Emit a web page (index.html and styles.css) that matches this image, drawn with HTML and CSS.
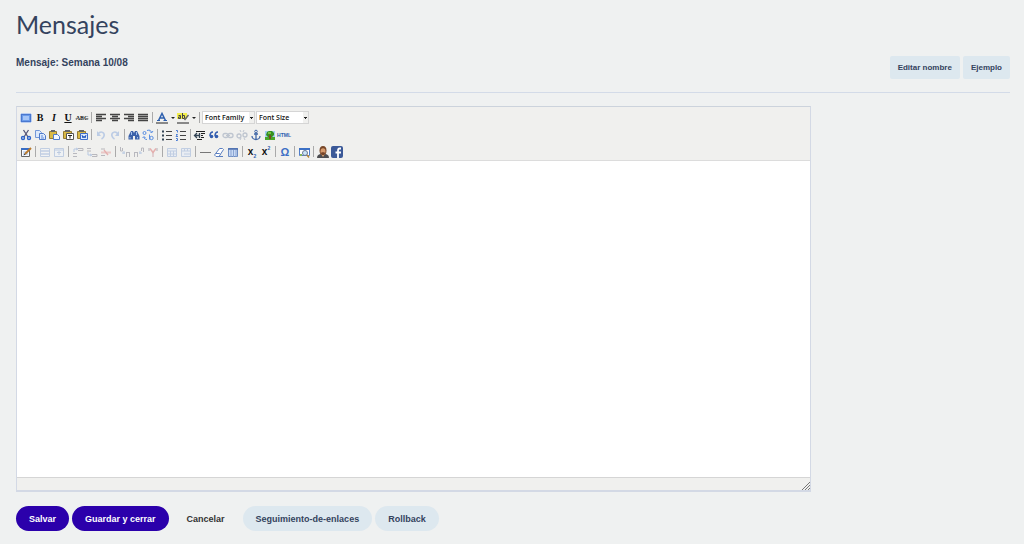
FILE: index.html
```html
<!DOCTYPE html>
<html lang="es">
<head>
    <meta charset="UTF-8">
    <meta name="viewport" content="width=device-width, initial-scale=1.0">
    <title>Mensajes</title>
    <link rel="stylesheet" href="styles.css">
</head>
<body>
    <h1>Mensajes</h1>

    <div class="header">
        <h2>Mensaje: Semana 10/08</h2>
        <div class="header-actions">
            <button type="button" class="btn-small">Editar nombre</button>
            <button type="button" class="btn-small">Ejemplo</button>
        </div>
    </div>

    <form>
        <div class="editor">
            <div class="toolbar">
                <!-- Formato de texto -->
                <div class="toolbar-row">
                    <button type="button" class="tool" aria-label="Pantalla completa"><svg viewBox="0 0 14 14"><rect x="2.5" y="3.5" width="9" height="7" fill="#6a9bea" stroke="#4a78cf"/><rect x="4" y="5" width="6" height="4" fill="#a5c5f7"/><path d="M2 2.500h10M2 11.500h10M1.500 3v8M12.500 3v8" stroke="#b9cdf0"/></svg></button>
                    <button type="button" class="tool bold" aria-label="Negrita">B</button>
                    <button type="button" class="tool italic" aria-label="Cursiva">I</button>
                    <button type="button" class="tool underline" aria-label="Subrayado">U</button>
                    <button type="button" class="tool strike" aria-label="Tachado">ABC</button>
                    <span class="separator"></span>
                    <button type="button" class="tool" aria-label="Izquierda"><svg viewBox="0 0 14 14"><path d="M2 3.500h10M2 5.500h6M2 7.500h10M2 9.500h6" stroke="#444" stroke-width="1.400"/></svg></button>
                    <button type="button" class="tool" aria-label="Centrar"><svg viewBox="0 0 14 14"><path d="M2 3.500h10M4 5.500h6M2 7.500h10M4 9.500h6" stroke="#444" stroke-width="1.400"/></svg></button>
                    <button type="button" class="tool" aria-label="Derecha"><svg viewBox="0 0 14 14"><path d="M2 3.500h10M6 5.500h6M2 7.500h10M6 9.500h6" stroke="#444" stroke-width="1.400"/></svg></button>
                    <button type="button" class="tool" aria-label="Justificar"><svg viewBox="0 0 14 14"><path d="M2 3.500h10M2 5.500h10M2 7.500h10M2 9.500h10" stroke="#444" stroke-width="1.400"/></svg></button>
                    <span class="separator"></span>
                    <button type="button" class="tool" aria-label="Color del texto"><svg viewBox="0 0 14 14"><path d="M3.500 9.500L7 2.500l3.500 7M5 7h4" fill="none" stroke="#2d5fae" stroke-width="1.500"/><path d="M2 9.500h3M8.500 9.500h3.500" stroke="#2d5fae"/><path d="M1 12h12" stroke="#888" stroke-width="2"/></svg></button>
                    <button type="button" class="arrow" aria-label="Elegir color"></button>
                    <button type="button" class="tool" aria-label="Color de fondo"><svg viewBox="0 0 14 14"><path d="M1 2h10v6H1z" fill="#f3ef4b"/><path d="M2.500 4.500h2v3h-2v-1.500h2M6.500 2v5.500h2v-3h-2" fill="none" stroke="#444"/><path d="M8.500 9l4-5" stroke="#666" stroke-width="1.500"/><path d="M1 12h12" stroke="#888" stroke-width="2"/></svg></button>
                    <button type="button" class="arrow" aria-label="Elegir color de fondo"></button>
                    <span class="separator"></span>
                    <select class="list" aria-label="Font Family"><option>Font Family</option></select>
                    <select class="list" aria-label="Font Size"><option>Font Size</option></select>
                </div>

                <!-- Portapapeles, listas y enlaces -->
                <div class="toolbar-row">
                    <button type="button" class="tool" aria-label="Cortar"><svg viewBox="0 0 14 14"><path d="M4.500 2l4.500 7M9.500 2L5 9" stroke="#557" stroke-width="1.300"/><circle cx="4" cy="10" r="1.500" fill="none" stroke="#2c62c9" stroke-width="1.400"/><circle cx="10" cy="10" r="1.500" fill="none" stroke="#2c62c9" stroke-width="1.400"/></svg></button>
                    <button type="button" class="tool" aria-label="Copiar"><svg viewBox="0 0 14 14"><path d="M2.500 2.500h4l2 2v5h-6z" fill="#dce9fc" stroke="#7498d8"/><path d="M6.500 5.500h4l2 2v4h-6z" fill="#dce9fc" stroke="#4f7bcb"/><path d="M8 8h2M8 10h3" stroke="#5e8add"/></svg></button>
                    <button type="button" class="tool" aria-label="Pegar"><svg viewBox="0 0 14 14"><path d="M2.500 3.500h7v7h-7z" fill="#d9b945" stroke="#957a32"/><path d="M4 2h4v2H4z" fill="#666"/><path d="M6.500 6.500h4l2 2v3h-6z" fill="#f4f8ff" stroke="#4f7bcb"/></svg></button>
                    <button type="button" class="tool" aria-label="Pegar texto"><svg viewBox="0 0 14 14"><path d="M2.500 3.500h8v7h-8z" fill="#d9b945" stroke="#957a32"/><path d="M4 2h5v2H4z" fill="#666"/><path d="M5.500 5.500h7v6h-7z" fill="#fff" stroke="#555"/><path d="M7 7.500h4M9 7.500v3" stroke="#222"/></svg></button>
                    <button type="button" class="tool" aria-label="Pegar desde Word"><svg viewBox="0 0 14 14"><path d="M2.500 3.500h8v7h-8z" fill="#d9b945" stroke="#957a32"/><path d="M4 2h5v2H4z" fill="#666"/><path d="M5.500 5.500h7v6h-7z" fill="#dce9fc" stroke="#3e6ecb"/><path d="M7 7l1 3 1-2 1 2 1-3" fill="none" stroke="#2458bd"/></svg></button>
                    <span class="separator"></span>
                    <button type="button" class="tool" aria-label="Deshacer" disabled><svg viewBox="0 0 14 14"><path d="M4 6c3-4 7-1 6 2-.4 1.500-1.500 2.500-2.500 3" fill="none" stroke="#6f97d8" stroke-width="1.600"/><path d="M3 3v5h4z" fill="#6f97d8"/></svg></button>
                    <button type="button" class="tool" aria-label="Rehacer" disabled><svg viewBox="0 0 14 14"><path d="M10 6c-3-4-7-1-6 2 .4 1.500 1.500 2.500 2.500 3" fill="none" stroke="#6f97d8" stroke-width="1.600"/><path d="M11 3v5H7z" fill="#6f97d8"/></svg></button>
                    <span class="separator"></span>
                    <button type="button" class="tool" aria-label="Buscar"><svg viewBox="0 0 14 14"><path d="M4 3h2l1 2 1-2h2l2.500 5v3.500H8V8H6v3.500H1.500V8z" fill="#3c62aa"/><path d="M4.500 4v3M9.500 4v3M3 9v1.500M10.500 9v1.500" stroke="#a5c2ee"/></svg></button>
                    <button type="button" class="tool" aria-label="Reemplazar"><svg viewBox="0 0 14 14"><circle cx="3.500" cy="5" r="1.500" fill="none" stroke="#5b8fe2"/><path d="M8.500 6.500v5M6 2.500c3-1 4 0 4.500 2M9 3.500l1.500 1.500L12 3M6 11.500c-2 0-3-1-3-2.500M1.500 10L3 8.500 4.500 10" fill="none" stroke="#5b8fe2"/><circle cx="10.500" cy="10" r="1.700" fill="none" stroke="#5b8fe2"/></svg></button>
                    <span class="separator"></span>
                    <button type="button" class="tool" aria-label="Viñetas"><svg viewBox="0 0 14 14"><path d="M6 3.500h6M6 7.500h6M6 11.500h6" stroke="#444"/><path d="M2 3.500h2M2 7.500h2M2 11.500h2" stroke="#345" stroke-width="1.800"/></svg></button>
                    <button type="button" class="tool" aria-label="Numeración"><svg viewBox="0 0 14 14"><path d="M6 3.500h6M6 7.500h6M6 11.500h6" stroke="#444"/><path d="M2 2.500h1.500v2M2 6.500h1.500L2 8.500h2M2 10.500h1.500v2H2" fill="none" stroke="#4f80d5"/></svg></button>
                    <span class="separator"></span>
                    <button type="button" class="tool" aria-label="Sangría"><svg viewBox="0 0 14 14"><path d="M3 3.500h9M8 5.500h4M8 7.500h2M8 9.500h3M4 11.500h5" stroke="#222"/><path d="M1.500 7.500H7M4 5L1.500 7.500 4 10M6.500 5v5" fill="none" stroke="#345" stroke-width="1.300"/></svg></button>
                    <button type="button" class="tool" aria-label="Cita"><svg viewBox="0 0 14 14"><path d="M6 4C4 4 3 6 3 8M11 4C9 4 8 6 8 8" fill="none" stroke="#315caf" stroke-width="1.500"/><circle cx="4.500" cy="8.500" r="1.800" fill="#315caf"/><circle cx="9.500" cy="8.500" r="1.800" fill="#315caf"/></svg></button>
                    <button type="button" class="tool" aria-label="Enlace" disabled><svg viewBox="0 0 14 14"><rect x="2" y="5.500" width="5" height="4" rx="2" fill="none" stroke="#7486a3" stroke-width="1.300"/><rect x="7" y="5.500" width="5" height="4" rx="2" fill="none" stroke="#7486a3" stroke-width="1.300"/><path d="M5 7.500h4" stroke="#7486a3"/></svg></button>
                    <button type="button" class="tool" aria-label="Quitar enlace" disabled><svg viewBox="0 0 14 14"><rect x="2" y="6" width="4" height="4" rx="2" fill="none" stroke="#7486a3" stroke-width="1.300"/><rect x="8" y="5" width="4" height="4" rx="2" fill="none" stroke="#7486a3" stroke-width="1.300"/><path d="M5 2l1 2M9 2L8 4M5 12l1-2M10 12l-1-2" stroke="#7486a3"/></svg></button>
                    <button type="button" class="tool" aria-label="Ancla"><svg viewBox="0 0 14 14"><circle cx="7" cy="3.500" r="1.300" fill="none" stroke="#4268a8"/><path d="M7 5v6M5 6h4M3 8c0 2 2 3.500 4 3.500S11 10 11 8" fill="none" stroke="#4268a8" stroke-width="1.300"/></svg></button>
                    <button type="button" class="tool" aria-label="Imagen"><svg viewBox="0 0 14 14"><path d="M2 3h10v8H2z" fill="#a6cdf1"/><path d="M2 9h10v3H2z" fill="#49a528"/><path d="M4 4l2-1h3l2 2v2L9 9H5L3 7z" fill="#35901f"/><path d="M5 4h3v2H5z" fill="#76c23e"/><path d="M7 7v4" stroke="#774b23" stroke-width="2"/></svg></button>
                    <button type="button" class="tool html" aria-label="HTML">HTML</button>
                </div>

                <!-- Tablas y extras -->
                <div class="toolbar-row">
                    <button type="button" class="tool" aria-label="Tabla"><svg viewBox="0 0 14 14"><path d="M2.500 3.500h8v8h-8z" fill="#f7faff" stroke="#666"/><path d="M2 4h9" stroke="#386dc4" stroke-width="2"/><path d="M4 7h3M4 9h5" stroke="#a1bbe2"/><path d="M6 9l6-6" stroke="#b9792c" stroke-width="2"/><path d="M4.500 10.500l1-2 1 1z" fill="#333"/></svg></button>
                    <span class="separator"></span>
                    <button type="button" class="tool" aria-label="Propiedades de fila" disabled><svg viewBox="0 0 14 14"><path d="M2.500 3.500h9v8h-9z" fill="#f4f7fc" stroke="#7d9dd2"/><path d="M3 6h8M3 9h8" stroke="#7d9dd2" stroke-width="1.500"/></svg></button>
                    <button type="button" class="tool" aria-label="Propiedades de celda" disabled><svg viewBox="0 0 14 14"><path d="M2.500 3.500h9v8h-9z" fill="#edf3fd" stroke="#7d9dd2"/><path d="M2 5h10M5 7.500h4M7 6v4" stroke="#7396d0"/></svg></button>
                    <span class="separator"></span>
                    <button type="button" class="tool" aria-label="Fila antes" disabled><svg viewBox="0 0 14 14"><path d="M7 3.500h5v2H7M2 8.500h4M2 11.500h4" fill="none" stroke="#667"/><path d="M3 7V4h3M5 3l2 1-2 1" fill="none" stroke="#6890d1"/></svg></button>
                    <button type="button" class="tool" aria-label="Fila después" disabled><svg viewBox="0 0 14 14"><path d="M2 3.500h4M2 6h4M7 9.500h5v2H7" fill="none" stroke="#667"/><path d="M3 7v3h3M5 9l2 1-2 1" fill="none" stroke="#6890d1"/></svg></button>
                    <button type="button" class="tool" aria-label="Borrar fila" disabled><svg viewBox="0 0 14 14"><path d="M2 4h4M2 10.500h4" stroke="#667"/><path d="M2 6.500h10v2H2z" fill="#e38f8f"/><path d="M5 5l4 5" stroke="#d65151" stroke-width="1.300"/></svg></button>
                    <span class="separator"></span>
                    <button type="button" class="tool" aria-label="Columna antes" disabled><svg viewBox="0 0 14 14"><path d="M2.500 2v4h2V3M8.500 7v5M11.500 7v5M8 7.500h4" fill="none" stroke="#667"/><path d="M4 8h3M6 6v3" stroke="#6890d1"/></svg></button>
                    <button type="button" class="tool" aria-label="Columna después" disabled><svg viewBox="0 0 14 14"><path d="M9.500 6V3h2v4M2.500 7v5M5.500 7v5M2 7.500h4" fill="none" stroke="#667"/><path d="M7 8h3M8 6v3" stroke="#6890d1"/></svg></button>
                    <button type="button" class="tool" aria-label="Borrar columna" disabled><svg viewBox="0 0 14 14"><path d="M3 3v3M11 3v3" stroke="#778" stroke-width="1.300"/><path d="M6 6h2v6H6z" fill="#c9a0a8"/><path d="M4 3.500l3 4 3-4" fill="none" stroke="#d65151" stroke-width="1.500"/></svg></button>
                    <span class="separator"></span>
                    <button type="button" class="tool" aria-label="Dividir celdas" disabled><svg viewBox="0 0 14 14"><path d="M2.500 3.500h9v8h-9zM2 6h10M5.500 6v5M8.500 6v5M2 9h10" fill="#dfebfc" stroke="#7d9dd2"/></svg></button>
                    <button type="button" class="tool" aria-label="Unir celdas" disabled><svg viewBox="0 0 14 14"><path d="M2.500 3.500h9v8h-9zM2 6h10M5.500 3v3M8.500 3v3M5 9h7" fill="#dfebfc" stroke="#7d9dd2"/></svg></button>
                    <span class="separator"></span>
                    <button type="button" class="tool" aria-label="Línea horizontal"><svg viewBox="0 0 14 14"><path d="M2 7.500h11" stroke="#777"/></svg></button>
                    <button type="button" class="tool" aria-label="Quitar formato"><svg viewBox="0 0 14 14"><path d="M7.500 3.500h3l1 1L7 11.500H4L2.500 10z" fill="#fff" stroke="#5b7fc0"/><path d="M4 8.500h3.500l1 1M7 11.500h4" fill="none" stroke="#5b7fc0"/></svg></button>
                    <button type="button" class="tool" aria-label="Líneas guía"><svg viewBox="0 0 14 14"><path d="M2.500 3.500h9v8h-9z" fill="#c9daf5" stroke="#6d8cc2"/><path d="M2 4h10" stroke="#4a6dad" stroke-width="1.500"/><path d="M5 5v7M7.500 5v7M10 5v7" stroke="#8aa5d2"/></svg></button>
                    <span class="separator"></span>
                    <button type="button" class="tool script" aria-label="Subíndice">x<sub>2</sub></button>
                    <button type="button" class="tool script" aria-label="Superíndice">x<sup>2</sup></button>
                    <span class="separator"></span>
                    <button type="button" class="tool omega" aria-label="Símbolo">Ω</button>
                    <span class="separator"></span>
                    <button type="button" class="tool" aria-label="Vista previa"><svg viewBox="0 0 14 14"><path d="M2.500 3.500h10v7h-10z" fill="#fff" stroke="#527fca"/><path d="M2 4h11" stroke="#3c70c5" stroke-width="2"/><circle cx="8" cy="8" r="2.500" fill="#cce5fa" stroke="#697994"/><path d="M10 10l2 2.500" stroke="#b88735" stroke-width="1.500"/><path d="M3 9h2v2H3z" fill="#85b85c"/></svg></button>
                    <span class="separator"></span>
                    <button type="button" class="tool" aria-label="Contacto"><svg viewBox="0 0 14 14"><path d="M1 13c0-3 2-4 4-4h4c2 0 4 1 4 4z" fill="#4d4d50"/><path d="M5 9h4l-2 3z" fill="#d7a171"/><ellipse cx="7" cy="5.500" rx="3.500" ry="4.500" fill="#774728"/><ellipse cx="7" cy="6.500" rx="2.500" ry="3.300" fill="#d79b6d"/><path d="M4.500 8c1-1 4-1 5 0L8 10H6z" fill="#764529"/></svg></button>
                    <button type="button" class="tool" aria-label="Facebook"><svg viewBox="0 0 14 14"><rect x="1" y="1" width="12" height="12" rx="2" fill="#3b5998"/><path d="M11 3.500h-1c-2 0-2 1-2 3V13M5.500 7.500H11" fill="none" stroke="#fff" stroke-width="1.800"/></svg></button>
                </div>
            </div>

            <textarea class="content" aria-label="Contenido del mensaje"></textarea>

            <div class="statusbar">
                <svg class="grip" viewBox="0 0 8 8"><path d="M0 8L8 0M3 8l5-5M6 8l2-2" stroke="#777"/></svg>
            </div>
        </div>

        <div class="actions">
            <button type="button" class="btn primary">Salvar</button>
            <button type="button" class="btn primary">Guardar y cerrar</button>
            <button type="button" class="btn cancel">Cancelar</button>
            <button type="button" class="btn">Seguimiento-de-enlaces</button>
            <button type="button" class="btn">Rollback</button>
        </div>
    </form>
</body>
</html>
```
FILE: styles.css
```css
* {
    box-sizing: border-box;
    margin: 0;
    padding: 0;
}

body {
    font-family: "Liberation Sans", Arial, sans-serif;
    background: #eff1f1;
    color: #34435e;
    padding: 8px 14px 12px 16px;
}

h1 {
    font-family: Muli, Lato, sans-serif;
    font-size: 25px;
    font-weight: 400;
    line-height: 32px;
}

h2 {
    font-size: 10px;
    line-height: 14px;
}

button {
    font-family: inherit;
    border: none;
    background: none;
    cursor: pointer;
}

/* Cabecera */
.header {
    display: flex;
    justify-content: space-between;
    align-items: flex-start;
    padding-top: 16px;
    padding-bottom: 13px;
    border-bottom: 1px solid #d3dbe8;
}

.header-actions {
    display: flex;
    gap: 3px;
}

.btn-small {
    height: 23px;
    padding: 0 8px;
    border-radius: 2px;
    background: #dde8ef;
    color: #34435e;
    font-size: 8px;
    font-weight: bold;
}

/* Editor */
.editor {
    width: 80%;
    margin-top: 13px;
    border: 1px solid #d3d9e5;
    border-top-color: #ccd3dc;
    border-bottom: 2px solid #d3d9e5;
    background: #f0f0ee;
}

.toolbar {
    padding: 2px 2px 0;
    border-bottom: 1px solid #dcdcdc;
}

.toolbar-row {
    display: flex;
    align-items: center;
    height: 17px;
}

.tool {
    display: flex;
    justify-content: center;
    align-items: center;
    flex: none;
    width: 14px;
    height: 14px;
    color: #111;
}

.tool svg {
    display: block;
    width: 14px;
    height: 14px;
}

.tool:disabled {
    opacity: 0.4;
}

.bold,
.italic,
.underline {
    font-family: "Liberation Serif", serif;
    font-size: 10px;
    font-weight: bold;
}

.italic {
    font-style: italic;
}

.underline {
    text-decoration: underline;
}

.strike {
    font-family: "Liberation Serif", serif;
    font-size: 6px;
    font-weight: bold;
    text-decoration: line-through #888;
}

.html {
    font-size: 5px;
    font-weight: bold;
    color: #2d5fae;
}

.script {
    font-size: 10px;
    font-weight: bold;
}

.script sub,
.script sup {
    font-size: 5px;
    color: #2d5fae;
}

.script sub {
    align-self: flex-end;
}

.script sup {
    align-self: flex-start;
}

.omega {
    font-size: 11px;
    font-weight: bold;
    color: #3f70c5;
}

.separator {
    flex: none;
    width: 1px;
    height: 11px;
    margin: 0 2px;
    background: #aaa;
}

.arrow {
    width: 7px;
    height: 14px;
}

.arrow::before {
    content: "";
    display: block;
    margin: 0 auto;
    width: 0;
    border: 2px solid transparent;
    border-top-color: #222;
    border-bottom: none;
}

.list {
    appearance: none;
    width: 53px;
    height: 13px;
    margin-right: 1px;
    padding-left: 2px;
    border: 1px solid #d5d5d5;
    border-radius: 0;
    background:
        linear-gradient(#222, #222) right 1px top 5px / 3px 1px no-repeat,
        linear-gradient(#222, #222) right 2px top 6px / 1px 1px no-repeat,
        linear-gradient(#f0f0ee, #f0f0ee) right / 5px 100% no-repeat,
        #fff;
    color: #111;
    font-family: "Open Sans", sans-serif;
    font-size: 7px;
    font-weight: 600;
}

.content {
    display: block;
    width: 100%;
    height: 316px;
    border: none;
    outline: none;
    resize: none;
    background: #fff;
}

.statusbar {
    display: flex;
    justify-content: flex-end;
    align-items: flex-end;
    height: 13px;
    border-top: 1px solid #d5d5d5;
}

.grip {
    width: 8px;
    height: 8px;
}

/* Botones del formulario */
.actions {
    display: flex;
    flex-wrap: wrap;
    gap: 3px;
    margin-top: 14px;
}

.btn {
    height: 25px;
    padding: 0 13px;
    border-radius: 13px;
    background: #dde8ef;
    color: #34435e;
    font-size: 9px;
    font-weight: bold;
}

.primary {
    background: #2b00ab;
    color: #fff;
}

.cancel {
    padding: 0 15px;
    background: none;
    color: #333;
}
```
